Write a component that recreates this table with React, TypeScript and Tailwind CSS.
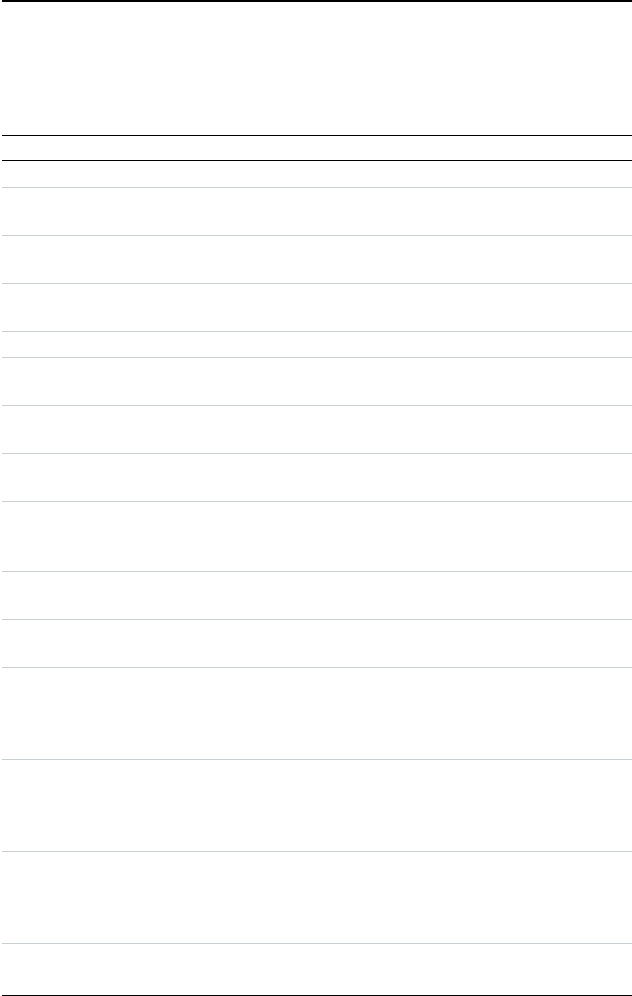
const rowHeights = [48, 48, 48, 26, 48, 48, 48, 70, 48, 48, 92, 92, 92, 52];

export default function App() {
  return (
    <div className="min-h-screen bg-white pl-[2px] font-['Liberation_Sans',sans-serif]">
      <div className="h-[135px] border-t-2 border-black" />
      <div className="h-[25px] border-t border-black" />
      <div className="h-[27px] border-t border-black" />
      {rowHeights.map((h, i) => (
        <div
          key={i}
          className="border-t border-[#c8d0d4]"
          style={{ height: h }}
        />
      ))}
      <div className="h-[2px] border-t-2 border-black" />
    </div>
  );
}
